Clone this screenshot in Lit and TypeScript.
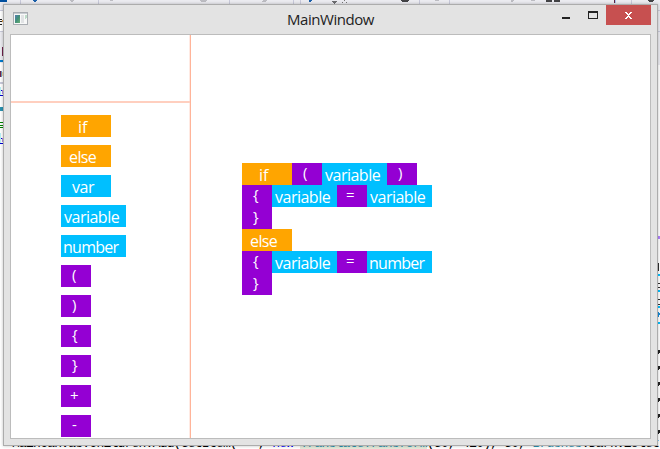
import { LitElement, html, svg, css } from "lit";
import { customElement, property } from "lit/decorators.js";

type Token = "if" | "else" | "var" | "variable" | "number" | "(" | ")" | "{" | "}" | "+" | "-" | "=";

const KIND: Record<string, string> = {
  if: "keyword i", else: "keyword e", var: "name r", variable: "name v", number: "name n",
  "+": "op plus", "=": "op",
};

@customElement("code-block")
class CodeBlock extends LitElement {
  @property() token: Token = "if";
  static styles = css`
    :host { display: block; flex: none; }
    .block {
      box-sizing: border-box; height: 22px; width: 30px; padding-left: 11px;
      background: #9400d3; color: #fff; white-space: pre;
      font: 15px/18px "Open Sans", "Noto Sans", sans-serif;
    }
    .keyword, .name { padding-top: 2px; font-size: 16px; line-height: 21px; letter-spacing: -0.5px; }
    .keyword { width: 50px; background: #ffa500; }
    .name { width: 65px; background: #00bfff; }
    .i { padding-left: 17px; letter-spacing: 0; }
    .e { padding-left: 8px; letter-spacing: -0.6px; }
    .r { width: 50px; padding-left: 11px; }
    .v { padding-left: 3px; }
    .n { padding-left: 2px; letter-spacing: -0.75px; }
    .op { padding-left: 9px; }
    .plus { line-height: 20px; }
  `;
  render() {
    return html`<div class="block ${KIND[this.token] ?? ""}">${this.token}</div>`;
  }
}

const PALETTE: Token[] = ["if", "else", "var", "variable", "number", "(", ")", "{", "}", "+", "-"];
const PROGRAM: Token[][] = [
  ["if", "(", "variable", ")"],
  ["{", "variable", "=", "variable"],
  ["}"],
  ["else"],
  ["{", "variable", "=", "number"],
  ["}"],
];
const SEPARATORS = [20, 98, 229, 293, 300, 419, 449, 631];
const COMMAS = [352, 368, 384, 400, 416, 432];

@customElement("app-root")
class AppRoot extends LitElement {
  static styles = css`
    :host {
      display: block; position: relative; width: 660px; height: 449px;
      overflow: hidden; background: #fff;
      font-family: "Open Sans", "Noto Sans", sans-serif;
    }
    .editor { position: absolute; inset: 0; display: block; }
    .source {
      position: absolute; left: 12px; top: 436px; white-space: pre; color: #000;
      font: 13px/16px "Liberation Mono", monospace; letter-spacing: -0.77px;
    }
    .kw { color: #00f; }
    .type { color: #2b91af; }
    .mark { background: #e2e9d9; }
    .window {
      position: absolute; left: 3px; top: 4px; box-sizing: border-box;
      width: 655px; height: 442px; padding: 0 6px 6px;
      border: 1px solid #acacac; background: #e3e3e3;
      box-shadow: 0 0 3px rgba(0, 0, 0, .25);
      display: flex; flex-direction: column;
    }
    .title { height: 29px; flex: none; display: grid; grid-template-columns: 1fr auto 1fr; }
    .appicon { margin: 7px 0 0 3px; display: block; }
    .caption { font-size: 15px; letter-spacing: -0.45px; line-height: 29px; color: #222; white-space: nowrap; }
    .controls { justify-self: end; display: block; }
    .client {
      flex: 1; box-sizing: border-box; border: 1px solid #bcbcbc; background: #fff;
      display: flex; min-height: 0; overflow: hidden;
    }
    .side {
      width: 180px; box-sizing: border-box; flex: none;
      border-right: 1px solid #ffb499; box-shadow: inset -1px 0 #ffeae3;
    }
    .empty { height: 68px; box-sizing: border-box; border-bottom: 2px solid #ffcfbf; }
    .palette { display: flex; flex-direction: column; align-items: flex-start; gap: 8px; padding: 12px 0 0 50px; }
    .canvas { padding: 128px 0 0 51px; }
    .line { display: flex; }
  `;

  backdrop() {
    return svg`
      <rect width="660" height="5" fill="#ebebf0"/>
      ${SEPARATORS.map((x) => svg`<rect x=${x} width="1" height="4" fill="#c8c9da"/>`)}
      <rect width="7" height="2" fill="#004f9f"/>
      <path d="M33 0h4l-1 2h-2zM309 0h3l-1 2h-2z" fill="#1a5fa8"/>
      <path d="M70 0h4l-1 2h-2zM110 0h3v1h-3zM199 0h8l-2 2h-4zM263 0h4l-1 2h-4zM435 0h4v1h-4zM511 0h3l-1 2h-2zM531 0h4v1h-4z" fill="#bcbcc2"/>
      <path d="M331 1h6l-3 3z" fill="#6d6d70"/>
      <path d="M344 0h1v1h-1zM342 2h1v1h-1zM346 2h1v1h-1z" fill="#777"/>
      <path d="M400 0h10l-3 2h-4zM546 0h6v2h-6zM554 0h6v2h-6zM647 0h7l-2 2h-3z" fill="#424245"/>
      <path d="M614 0h1v3h-1z" fill="#602040"/>
      <path d="M615 0h1v3h-1z" fill="#a8c4ea"/>
      <path d="M0 5h3v58H0zM657 5h3v60h-3z" fill="#ebebf0"/>
      <path d="M0 10h3v1H0zM0 31h3v1H0zM0 82h3v2H0zM657 10h3v1h-3zM657 31h3v1h-3z" fill="#c8c9da"/>
      <rect y="11" width="3" height="20" fill="#fff"/>
      <path d="M0 19h2v1H0zM0 21h2v1H0zM0 24h2v1H0z" fill="#222"/>
      <path d="M2 20h1v2H2z" fill="#e9a34c"/>
      <path d="M2 47h1v9H2zM0 71h1v6H0z" fill="#70204a"/>
      <path d="M1 71h1v6H1z" fill="#6d9bc0"/>
      <path d="M2 72h1v4H2z" fill="#efdba0"/>
      <rect y="60" width="3" height="2" fill="#007acc"/>
      <path d="M0 87h1v8H0zM0 133h1v10H0z" fill="#b5f0f5"/>
      <path d="M1 90h1v1H1zM0 95h3v1H0zM1 138h1v1H1zM0 143h3v1H0z" fill="#0000d0"/>
      <path d="M2 90h1v4H2zM2 138h1v4H2z" fill="#b58ae0"/>
      <path d="M0 107l1 4 1-4 1 4" fill="none" stroke="#2b91af"/>
      <path d="M0 122h3v1H0zM0 125h3v1H0zM0 127h3v1H0z" fill="#008000"/>
      <path d="M658 236h2v3h-2z" fill="#b080ff"/>
      <path d="M658 263h1v8h-1zM658 283h2v1h-2zM658 287h2v1h-2zM658 299h2v1h-2zM658 304h2v1h-2z" fill="#303030"/>
      <path d="M658 274h2v2h-2zM658 290h2v2h-2zM658 306h2v2h-2zM658 322h2v2h-2z" fill="#00bfff"/>
      <path d="M658 311l2 3-2 4z" fill="#168ad8"/>
      ${COMMAS.map((y) => svg`<path d="M658 ${y - 2}h2v3l-2 1z" fill="#222"/>`)}
    `;
  }

  render() {
    return html`
      <svg class="editor" width="660" height="449" shape-rendering="crispEdges">${this.backdrop()}</svg>
      <div class="source">MainCanvas.Children.Add(GetItem("-", <span class="kw">new</span> <span class="type mark">TranslateTransform</span>(50, 410), 50, <span class="type">Brushes</span>.DarkViolet,</div>
      <div class="window">
        <div class="title">
          <svg class="appicon" width="16" height="14" shape-rendering="crispEdges">
            <defs><linearGradient id="pane" x2="1" y2="1">
              <stop stop-color="#557fb5"/><stop offset=".5" stop-color="#438f79"/><stop offset="1" stop-color="#69b176"/>
            </linearGradient></defs>
            <rect x=".5" y=".5" width="14" height="12" fill="#f7f8f8" stroke="#a9adb2"/>
            <path d="M1 1h13v1H1z" fill="#c8cdd2"/>
            <rect x="2" y="3" width="5" height="8" fill="url(#pane)"/>
            <rect x="8" y="3" width="3" height="8" fill="#e1e3e5"/>
            <path d="M12 3h2v3l-2 1z" fill="#bcdcc8"/>
          </svg>
          <div class="caption">MainWindow</div>
          <svg class="controls" width="91" height="29" shape-rendering="crispEdges">
            <rect x="46" width="45" height="20" fill="#c75050"/>
            <rect x="2" y="12" width="8" height="2" fill="#222"/>
            <path d="M28 6h10v8H28zM29 8v5h8V8z" fill="#222" fill-rule="evenodd"/>
            <path d="M65 7h2v1h1v1h1v-1h1v-1h2v1h-1v1h-1v1h-1v1h1v1h1v1h1v1h-2v-1h-1v-1h-1v1h-1v1h-2v-1h1v-1h1v-1h1v-1h-1v-1h-1v-1h-1z" fill="#fff"/>
          </svg>
        </div>
        <div class="client">
          <div class="side">
            <div class="empty"></div>
            <div class="palette">${PALETTE.map((t) => html`<code-block .token=${t}></code-block>`)}</div>
          </div>
          <div class="canvas">
            ${PROGRAM.map((line) => html`<div class="line">${line.map((t) => html`<code-block .token=${t}></code-block>`)}</div>`)}
          </div>
        </div>
      </div>
    `;
  }
}
